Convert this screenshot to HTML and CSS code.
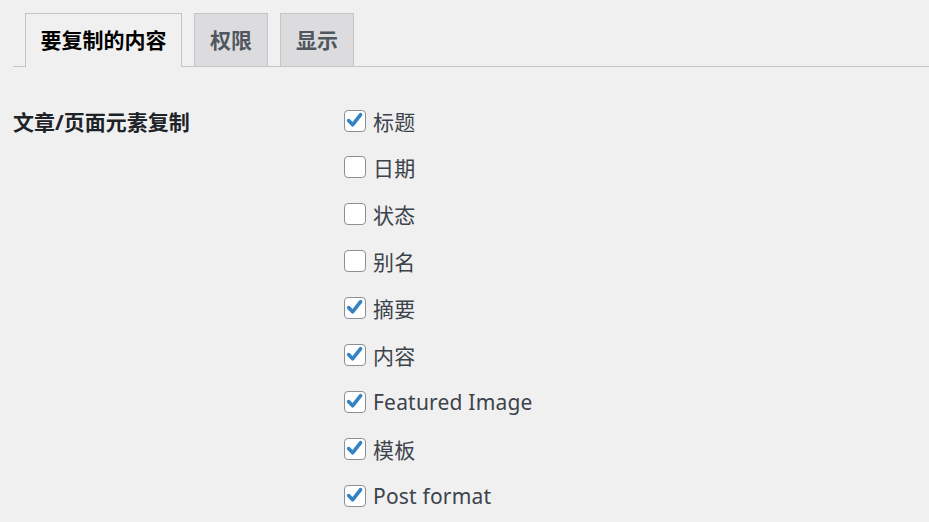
FILE: index.html
```html
<!DOCTYPE html>
<html lang="zh-CN">
<head>
  <meta charset="UTF-8">
  <title>Duplicate Post</title>
  <link rel="stylesheet" href="styles.css">
</head>
<body>
  <div class="tabs">
    <a class="tab active" href="#what">要复制的内容</a>
    <a class="tab" href="#who">权限</a>
    <a class="tab" href="#where">显示</a>
  </div>

  <div class="row">
    <div class="label">文章/页面元素复制</div>
    <div class="options">
      <label class="opt"><span class="box checked"></span>标题</label>
      <label class="opt"><span class="box"></span>日期</label>
      <label class="opt"><span class="box"></span>状态</label>
      <label class="opt"><span class="box"></span>别名</label>
      <label class="opt"><span class="box checked"></span>摘要</label>
      <label class="opt"><span class="box checked"></span>内容</label>
      <label class="opt"><span class="box checked"></span>Featured Image</label>
      <label class="opt"><span class="box checked"></span>模板</label>
      <label class="opt"><span class="box checked"></span>Post format</label>
    </div>
  </div>
</body>
</html>
```

FILE: styles.css
```css
body {
  margin: 0;
  background: #f0f0f1;
  font-family: "Noto Sans", "Noto Sans CJK SC", sans-serif;
  color: #3c434a;
}
.tabs {
  display: flex;
  gap: 12px;
  margin: 13px 0 0 13px;
  padding-left: 12px;
  border-bottom: 1px solid #c3c4c7;
}
.tab {
  display: block;
  height: 52px;
  line-height: 52px;
  padding: 0 15px;
  border: 1px solid #c3c4c7;
  border-bottom: none;
  background: #dcdcde;
  color: #50575e;
  font-size: 21px;
  font-weight: 600;
  text-decoration: none;
  margin-bottom: -1px;
}
.tab.active {
  background: #f0f0f1;
  color: #000;
  height: 53px;
  padding: 0 14.5px;
}
.row {
  display: flex;
  padding: 38px 0 0 13px;
}
.label {
  width: 331px;
  font-size: 21px;
  font-weight: 700;
  color: #1d2327;
  line-height: 31px;
  padding-top: 2px;
}
.options {
  display: flex;
  flex-direction: column;
  gap: 15.9px;
}
.opt {
  display: flex;
  align-items: center;
  gap: 7px;
  height: 31px;
  font-size: 21px;
  letter-spacing: 0.2px;
}
.box {
  width: 20px;
  height: 20px;
  border: 1px solid #8c8f94;
  border-radius: 4px;
  background: #fff;
  position: relative;
}
.box.checked::after {
  content: "";
  position: absolute;
  inset: 0;
  background: url("data:image/svg+xml,%3Csvg xmlns='http://www.w3.org/2000/svg' viewBox='0 0 20 20'%3E%3Cpolyline points='3.6,9.6 7.6,13.8 15.6,3.6' fill='none' stroke='%233582c4' stroke-width='3.6' stroke-linecap='round' stroke-linejoin='round'/%3E%3C/svg%3E") no-repeat center / 20px 20px;
}
```
